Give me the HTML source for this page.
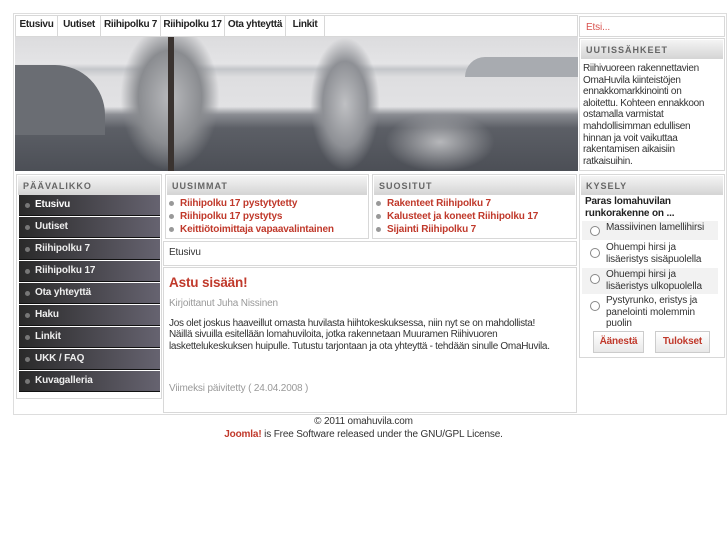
<!DOCTYPE html><html><head><meta charset="utf-8"><style>
*{margin:0;padding:0;box-sizing:border-box}
body{width:727px;height:545px;background:#fff;font-family:"Liberation Sans",sans-serif;font-size:11px;color:#333;position:relative;overflow:hidden;letter-spacing:-0.15px}
.a{position:absolute}
.box{position:absolute;border:1px solid #d8d8d8;background:#fff}
.hd{height:19px;background:linear-gradient(#f4f4f4,#d4d4d4);font-size:9px;letter-spacing:1px;color:#666;padding:5px 5px;font-weight:bold;margin:1px}
.nav a{position:absolute;top:0;height:20px;border-right:1px solid #d8d8d8;font-weight:bold;color:#222;text-align:center;line-height:17px;font-size:10px;white-space:nowrap;letter-spacing:-0.3px}
.mi{position:absolute;left:2px;width:141px;height:21px;background:linear-gradient(90deg,#2a2a2a,#666370);color:#eee;font-weight:bold;font-size:10px;padding-left:16px;line-height:20px;border-bottom:1px solid #111}
.mi:before{content:"";position:absolute;left:6px;top:8px;width:5px;height:5px;border-radius:50%;background:#777}
ul{list-style:none}
li{position:relative;padding-left:14px;color:#c0392b;font-weight:bold;font-size:10px;line-height:13px}
li:before{content:"";position:absolute;left:3px;top:4px;width:5px;height:5px;border-radius:50%;background:#999}
.r{position:absolute;width:10px;height:10px;border:1px solid #888;border-radius:50%;background:#fff}
.opt{position:absolute;left:2px;width:136px;font-size:10px;color:#333;padding-left:24px;line-height:11.5px}
.btn{position:absolute;height:22px;border:1px solid #ccc;background:linear-gradient(#fff,#e8e8e8);color:#c0392b;font-weight:bold;font-size:10px;text-align:center;line-height:20px}
</style></head><body>
<div class="box" style="left:13px;top:13px;width:714px;height:402px;border-color:#ddd"></div>
<div class="box nav" style="left:15px;top:15px;width:563px;height:22px">
<a style="left:0;width:42px">Etusivu</a><a style="left:42px;width:43px">Uutiset</a><a style="left:85px;width:60px">Riihipolku 7</a><a style="left:145px;width:64px">Riihipolku 17</a><a style="left:209px;width:61px">Ota yhteyttä</a><a style="left:270px;width:39px">Linkit</a>
</div>
<div class="box" style="left:579px;top:16px;width:146px;height:21px;color:#d9534f;font-size:10px;padding:5px 6px">Etsi...</div>
<div class="a" style="left:15px;top:37px;width:563px;height:134px;overflow:hidden;background:linear-gradient(#dcdcde 0%,#e4e4e6 20%,#c4c6ca 24%,#dedee0 30%,#e2e2e4 52%,#8a8c92 58%,#5c5f66 68%,#4c4f56 100%)">
<div class="a" style="left:0;top:28px;width:90px;height:70px;background:#6a6d73;border-radius:0 50px 0 0"></div>
<div class="a" style="left:450px;top:20px;width:120px;height:20px;background:#a8abb0;border-radius:50px 0 0 0"></div>
<div class="a" style="left:105px;top:0;width:100px;height:134px;background:radial-gradient(ellipse at 50% 45%,#b8b9bc 0%,#8a8c90 45%,transparent 70%)"></div>
<div class="a" style="left:153px;top:0;width:6px;height:134px;background:#3a3330"></div>
<div class="a" style="left:295px;top:0;width:70px;height:134px;background:radial-gradient(ellipse at 50% 50%,#bfc0c3 0%,#8e9095 45%,transparent 70%)"></div>
<div class="a" style="left:370px;top:75px;width:110px;height:60px;background:radial-gradient(ellipse,#b6b7ba 0%,transparent 70%)"></div>
</div>
<div class="box" style="left:579px;top:38px;width:146px;height:133px">
<div class="hd">UUTISSÄHKEET</div>
<div style="padding:3px 3px;font-size:10px;line-height:11.6px;color:#333;letter-spacing:-0.3px;white-space:nowrap">Riihivuoreen rakennettavien<br>OmaHuvila kiinteistöjen<br>ennakkomarkkinointi on<br>aloitettu. Kohteen ennakkoon<br>ostamalla varmistat<br>mahdollisimman edullisen<br>hinnan ja voit vaikuttaa<br>rakentamisen aikaisiin<br>ratkaisuihin.</div>
</div>
<div class="box" style="left:16px;top:174px;width:146px;height:225px">
<div class="hd">PÄÄVALIKKO</div>
<div class="mi" style="top:20px;color:#fff">Etusivu</div>
<div class="mi" style="top:42px">Uutiset</div>
<div class="mi" style="top:64px">Riihipolku 7</div>
<div class="mi" style="top:86px">Riihipolku 17</div>
<div class="mi" style="top:108px">Ota yhteyttä</div>
<div class="mi" style="top:130px">Haku</div>
<div class="mi" style="top:152px">Linkit</div>
<div class="mi" style="top:174px">UKK / FAQ</div>
<div class="mi" style="top:196px">Kuvagalleria</div>
</div>
<div class="box" style="left:165px;top:174px;width:204px;height:65px">
<div class="hd">UUSIMMAT</div>
<ul style="margin-top:2px"><li>Riihipolku 17 pystytytetty</li><li>Riihipolku 17 pystytys</li><li>Keittiötoimittaja vapaavalintainen</li></ul>
</div>
<div class="box" style="left:372px;top:174px;width:205px;height:65px">
<div class="hd">SUOSITUT</div>
<ul style="margin-top:2px"><li>Rakenteet Riihipolku 7</li><li>Kalusteet ja koneet Riihipolku 17</li><li>Sijainti Riihipolku 7</li></ul>
</div>
<div class="box" style="left:163px;top:241px;width:414px;height:25px;padding:5px 5px;font-size:10px">Etusivu</div>
<div class="box" style="left:163px;top:267px;width:414px;height:146px;padding:0 5px">
<div style="color:#c0392b;font-weight:bold;font-size:13.5px;margin-top:7px">Astu sisään!</div>
<div style="color:#999;font-size:10px;margin-top:8px">Kirjoittanut Juha Nissinen</div>
<div style="font-size:10px;line-height:11.3px;margin-top:9px;color:#333;letter-spacing:-0.3px">Jos olet joskus haaveillut omasta huvilasta hiihtokeskuksessa, niin nyt se on mahdollista!<br>Näillä sivuilla esitellään lomahuviloita, jotka rakennetaan Muuramen Riihivuoren<br>laskettelukeskuksen huipulle. Tutustu tarjontaan ja ota yhteyttä - tehdään sinulle OmaHuvila.</div>
<div style="color:#999;font-size:10px;margin-top:31px">Viimeksi päivitetty ( 24.04.2008 )</div>
</div>
<div class="box" style="left:579px;top:174px;width:146px;height:184px">
<div class="hd">KYSELY</div>
<div style="font-weight:bold;font-size:10px;line-height:12px;padding:0 5px;color:#222">Paras lomahuvilan runkorakenne on ...</div>
<div class="opt" style="top:46px;height:19px;background:#f2f2f2;padding-top:1px">Massiivinen lamellihirsi</div><div class="r" style="left:10px;top:51px"></div>
<div class="opt" style="top:67px">Ohuempi hirsi ja lisäeristys sisäpuolella</div><div class="r" style="left:10px;top:73px"></div>
<div class="opt" style="top:93px;height:26px;background:#f2f2f2;padding-top:1px">Ohuempi hirsi ja lisäeristys ulkopuolella</div><div class="r" style="left:10px;top:99px"></div>
<div class="opt" style="top:120px">Pystyrunko, eristys ja panelointi molemmin puolin</div><div class="r" style="left:10px;top:126px"></div>
<div class="btn" style="left:13px;top:156px;width:51px">Äänestä</div>
<div class="btn" style="left:75px;top:156px;width:55px">Tulokset</div>
</div>
<div class="a" style="left:0;top:415px;width:727px;text-align:center;font-size:10px;line-height:13px;color:#333">© 2011 omahuvila.com<br><b style="color:#c0392b">Joomla!</b> is Free Software released under the GNU/GPL License.</div>
</body></html>
